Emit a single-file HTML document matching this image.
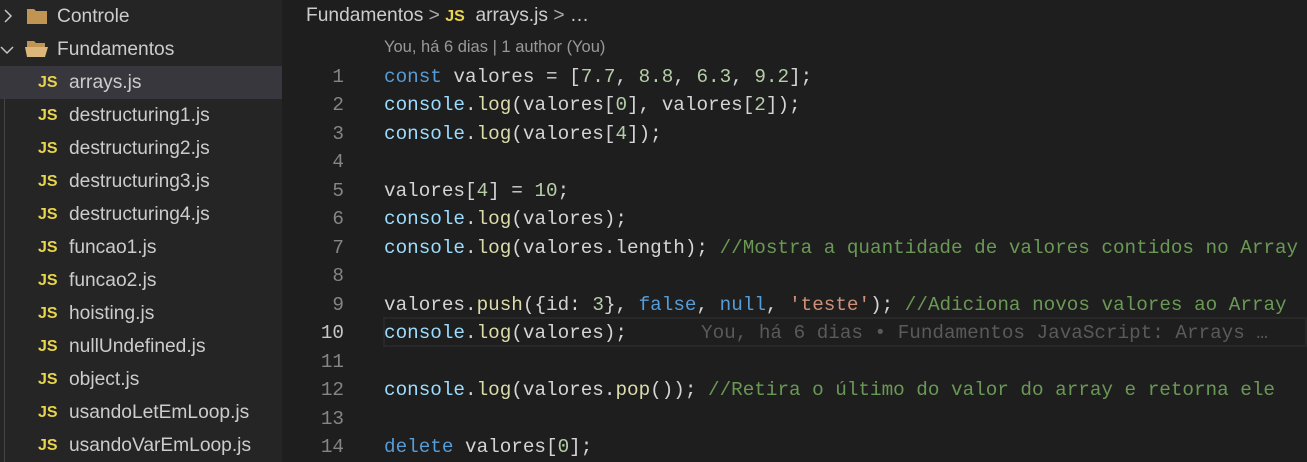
<!DOCTYPE html>
<html><head><style>
*{margin:0;padding:0;box-sizing:border-box}
body{width:1307px;height:462px;overflow:hidden;background:#1e1e1e;position:relative;font-family:"Liberation Sans",sans-serif}
#side{position:absolute;left:0;top:0;width:282px;height:462px;background:#252526}
.row{position:absolute;left:0;width:282px;height:33px;color:#cccccc;font-size:19.2px;line-height:33px}
.row .n{position:absolute;left:69px}
.row .js{position:absolute;left:38px;color:#e8d44d;font-weight:bold;font-size:16px}
.sel{background:#37373d}
.guide{position:absolute;left:4px;top:66px;width:1px;height:396px;background:#454545}
.ed{position:absolute;font-family:"Liberation Mono",monospace;font-size:19.3px;white-space:pre;color:#d4d4d4}
.ln{position:absolute;width:60px;left:284px;text-align:right;font-family:"Liberation Mono",monospace;font-size:19.3px;color:#858585}
.k{color:#569cd6}.f{color:#dcdcaa}.num{color:#b5cea8}.s{color:#ce9178}.c{color:#6a9955}.p{color:#d4d4d4}.w{color:#9cdcfe}
</style></head><body>
<div id="side">
<svg style="position:absolute;left:2px;top:9px" width="12" height="14"><path d="M3 1 L9 7 L3 13" stroke="#c5c5c5" stroke-width="1.5" fill="none"/></svg>
<svg style="position:absolute;left:27px;top:7px" width="21" height="18"><path d="M0 2 h7 l2 2 h11 v13 h-20z" fill="#c09553"/></svg>
<div class="row" style="top:0"><span class="n" style="left:57px">Controle</span></div>
<svg style="position:absolute;left:0px;top:44px" width="16" height="12"><path d="M1 3 L7 9 L13 3" stroke="#c5c5c5" stroke-width="1.5" fill="none"/></svg>
<svg style="position:absolute;left:25px;top:40px" width="24" height="18"><path d="M2 1 h7 l2 2 h9 v4 h-18z" fill="#c09553"/><path d="M0 7 h23 l-3 10 h-18z" fill="#dcb67a"/></svg>
<div class="row" style="top:33px"><span class="n" style="left:57px">Fundamentos</span></div>
<div class="guide"></div>
<div class="row sel" style="top:66px"><span class="js">JS</span><span class="n">arrays.js</span></div>
<div class="row" style="top:99px"><span class="js">JS</span><span class="n">destructuring1.js</span></div>
<div class="row" style="top:132px"><span class="js">JS</span><span class="n">destructuring2.js</span></div>
<div class="row" style="top:165px"><span class="js">JS</span><span class="n">destructuring3.js</span></div>
<div class="row" style="top:198px"><span class="js">JS</span><span class="n">destructuring4.js</span></div>
<div class="row" style="top:231px"><span class="js">JS</span><span class="n">funcao1.js</span></div>
<div class="row" style="top:264px"><span class="js">JS</span><span class="n">funcao2.js</span></div>
<div class="row" style="top:297px"><span class="js">JS</span><span class="n">hoisting.js</span></div>
<div class="row" style="top:330px"><span class="js">JS</span><span class="n">nullUndefined.js</span></div>
<div class="row" style="top:363px"><span class="js">JS</span><span class="n">object.js</span></div>
<div class="row" style="top:396px"><span class="js">JS</span><span class="n">usandoLetEmLoop.js</span></div>
<div class="row" style="top:429px"><span class="js">JS</span><span class="n">usandoVarEmLoop.js</span></div>
</div>
<div style="position:absolute;left:306px;top:5px;color:#cccccc;font-size:19.2px">Fundamentos <span style="color:#aaa">&gt;</span> <b style="color:#e8d44d;font-size:16px">JS</b>&nbsp; arrays.js <span style="color:#aaa">&gt;</span> …</div>
<div style="position:absolute;left:384px;top:38px;color:#999999;font-size:16.5px">You, há 6 dias | 1 author (You)</div>
<div style="position:absolute;left:383px;top:317px;width:924px;height:30px;border:2px solid #282828"></div>
<div class="ln" style="top:66px">1</div>
<div class="ln" style="top:94px">2</div>
<div class="ln" style="top:123px">3</div>
<div class="ln" style="top:151px">4</div>
<div class="ln" style="top:180px">5</div>
<div class="ln" style="top:208px">6</div>
<div class="ln" style="top:237px">7</div>
<div class="ln" style="top:265px">8</div>
<div class="ln" style="top:294px">9</div>
<div class="ln" style="top:322px;color:#c6c6c6">10</div>
<div class="ln" style="top:351px">11</div>
<div class="ln" style="top:379px">12</div>
<div class="ln" style="top:408px">13</div>
<div class="ln" style="top:436px">14</div>
<div class="ed" style="left:384px;top:66px"><span class="k">const</span> valores = [<span class="num">7.7</span>, <span class="num">8.8</span>, <span class="num">6.3</span>, <span class="num">9.2</span>];</div>
<div class="ed" style="left:384px;top:94px"><span class="w">console</span>.<span class="f">log</span>(valores[<span class="num">0</span>], valores[<span class="num">2</span>]);</div>
<div class="ed" style="left:384px;top:123px"><span class="w">console</span>.<span class="f">log</span>(valores[<span class="num">4</span>]);</div>
<div class="ed" style="left:384px;top:180px">valores[<span class="num">4</span>] = <span class="num">10</span>;</div>
<div class="ed" style="left:384px;top:208px"><span class="w">console</span>.<span class="f">log</span>(valores);</div>
<div class="ed" style="left:384px;top:237px"><span class="w">console</span>.<span class="f">log</span>(valores.length); <span class="c">//Mostra a quantidade de valores contidos no Array</span></div>
<div class="ed" style="left:384px;top:294px">valores.<span class="f">push</span>({id: <span class="num">3</span>}, <span class="k">false</span>, <span class="k">null</span>, <span class="s">'teste'</span>); <span class="c">//Adiciona novos valores ao Array</span></div>
<div class="ed" style="left:384px;top:322px"><span class="w">console</span>.<span class="f">log</span>(valores);</div>
<div class="ed" style="left:701px;top:322px;color:#5a5a5a">You, há 6 dias • Fundamentos JavaScript: Arrays …</div>
<div class="ed" style="left:384px;top:379px"><span class="w">console</span>.<span class="f">log</span>(valores.<span class="f">pop</span>()); <span class="c">//Retira o último do valor do array e retorna ele</span></div>
<div class="ed" style="left:384px;top:436px"><span class="k">delete</span> valores[<span class="num">0</span>];</div>
</body></html>
